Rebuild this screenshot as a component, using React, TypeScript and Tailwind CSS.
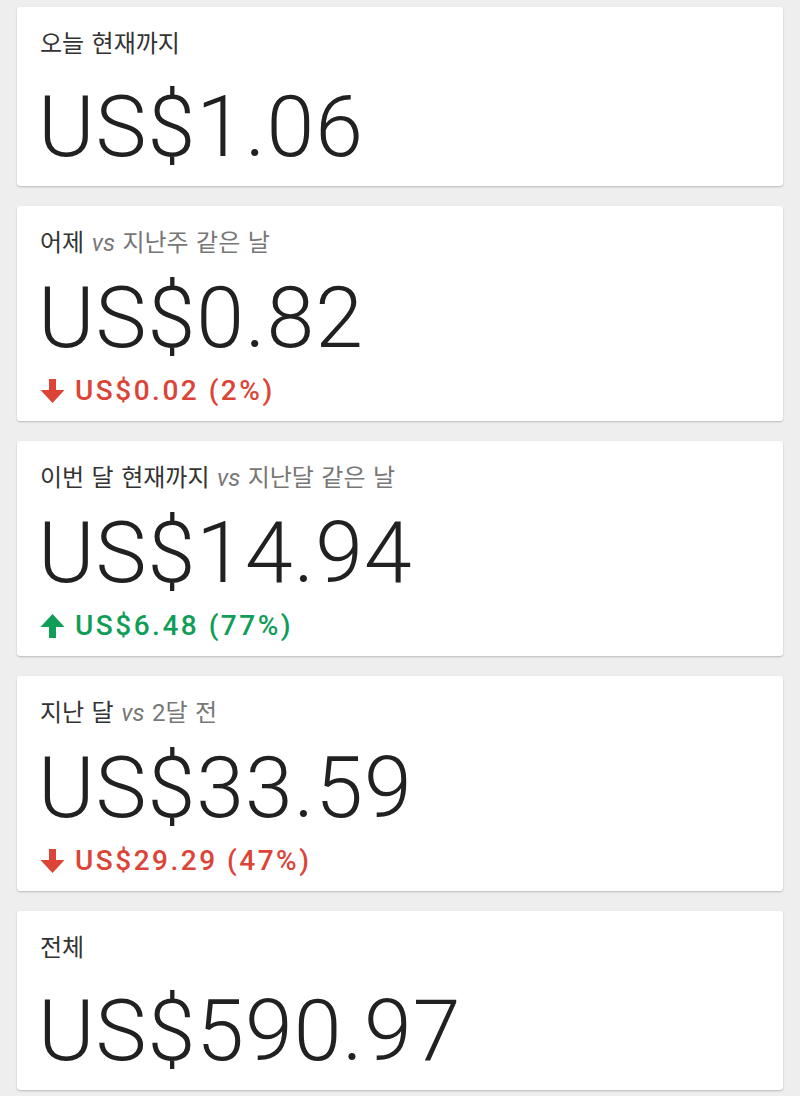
import React from "react";

type Change = { dir: "up" | "down"; text: string };
type Stat = { title: string; compare?: string; amount: string; change?: Change };

const stats: Stat[] = [
  { title: "오늘 현재까지", amount: "US$1.06" },
  { title: "어제", compare: "지난주 같은 날", amount: "US$0.82", change: { dir: "down", text: "US$0.02 (2%)" } },
  { title: "이번 달 현재까지", compare: "지난달 같은 날", amount: "US$14.94", change: { dir: "up", text: "US$6.48 (77%)" } },
  { title: "지난 달", compare: "2달 전", amount: "US$33.59", change: { dir: "down", text: "US$29.29 (47%)" } },
  { title: "전체", amount: "US$590.97" },
];

function Arrow({ dir }: { dir: "up" | "down" }) {
  return (
    <svg width="25" height="24" viewBox="0 0 25 24" className={dir === "up" ? "rotate-180" : ""} fill="currentColor">
      <rect x="9" y="0" width="7" height="12" />
      <polygon points="0.5,11 24.5,11 12.5,24" />
    </svg>
  );
}

function StatCard({ s }: { s: Stat }) {
  return (
    <div
      className={`bg-white rounded-[3px] shadow-[0_1px_2px_rgba(0,0,0,0.22)] px-[23px] pt-[22px] ${
        s.change ? "pb-[14px]" : "pb-[15px]"
      }`}
    >
      <div className="text-[24px] leading-[30px] text-[#333] [word-spacing:1.5px]">
        {s.title}
        {s.compare && (
          <span className="text-[#777]">
            {" "}
            <i>vs</i> {s.compare}
          </span>
        )}
      </div>
      <div
        className={`text-[86px] leading-none font-light tracking-[1px] text-[#212121] -ml-[2px] ${
          s.change ? "mt-[17px]" : "mt-[25px] mb-[1px]"
        }`}
      >
        {s.amount}
      </div>
      {s.change && (
        <div
          className={`mt-[14px] flex items-center gap-[10px] text-[28px] leading-[32px] font-medium tracking-[2.5px] ${
            s.change.dir === "down" ? "text-[#db4437]" : "text-[#0f9d58]"
          }`}
        >
          <Arrow dir={s.change.dir} />
          <span>{s.change.text}</span>
        </div>
      )}
    </div>
  );
}

export default function App() {
  return (
    <div
      className="min-h-screen bg-[#eeeeee] px-[17px] pt-[7px] pb-[7px] flex flex-col gap-[20px]"
      style={{ fontFamily: 'Roboto, "Noto Sans CJK KR", sans-serif' }}
    >
      {stats.map((s) => (
        <StatCard key={s.amount} s={s} />
      ))}
    </div>
  );
}
